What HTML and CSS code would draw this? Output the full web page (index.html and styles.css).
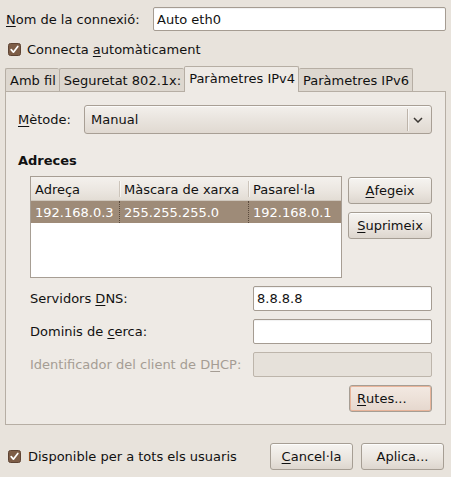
FILE: index.html
```html
<!DOCTYPE html>
<html>
<head>
<meta charset="utf-8">
<link rel="stylesheet" href="styles.css">
</head>
<body>
<div class="dialog">
  <div class="name-row">
    <span class="label"><u>N</u>om de la connexió:</span>
    <div class="entry name-entry">Auto eth0</div>
  </div>
  <div class="check-row">
    <span class="check"><svg width="13" height="13" viewBox="0 0 13 13"><rect x="0.5" y="0.5" width="12" height="12" rx="2" fill="#7d5d47" stroke="#5e4434"/><path d="M3.2 6.6 L5.4 9.2 L9.8 3.4" fill="none" stroke="#fff" stroke-width="1.7" stroke-linecap="round" stroke-linejoin="round"/></svg></span>
    <span>Connecta <u>a</u>utomàticament</span>
  </div>
  <div class="notebook">
    <div class="tabs">
      <div class="tab">Amb fil</div>
      <div class="tab">Seguretat 802.1x:</div>
      <div class="tab active">Paràmetres IPv4</div>
      <div class="tab">Paràmetres IPv6</div>
    </div>
    <div class="page">
      <div class="method-row">
        <span class="label"><u>M</u>ètode:</span>
        <div class="combo">
          <span class="combo-text">Manual</span>
          <span class="combo-sep"></span>
          <svg class="chevron" width="10" height="6" viewBox="0 0 10 6"><path d="M1 1 L5 5 L9 1" fill="none" stroke="#3c3834" stroke-width="1.5"/></svg>
        </div>
      </div>
      <div class="section-title">Adreces</div>
      <div class="addr-row">
        <div class="tree">
          <div class="tree-head">
            <div class="cell">Adreça</div>
            <div class="cell sep">Màscara de xarxa</div>
            <div class="cell sep">Pasarel·la</div>
          </div>
          <div class="tree-row selected">
            <div class="cell">192.168.0.3</div>
            <div class="cell dot">255.255.255.0</div>
            <div class="cell dot">192.168.0.1</div>
          </div>
        </div>
        <div class="addr-buttons">
          <div class="button"><u>A</u>fegeix</div>
          <div class="button"><u>S</u>uprimeix</div>
        </div>
      </div>
      <div class="form">
        <span class="label">Servidors <u>D</u>NS:</span>
        <div class="entry">8.8.8.8</div>
        <span class="label">Dominis de <u>c</u>erca:</span>
        <div class="entry"></div>
        <span class="label disabled">Identificador del client de D<u>H</u>CP:</span>
        <div class="entry disabled"></div>
      </div>
      <div class="routes-row">
        <div class="button focus"><u>R</u>utes...</div>
      </div>
    </div>
  </div>
  <div class="footer">
    <div class="check-row bottom">
      <span class="check"><svg width="13" height="13" viewBox="0 0 13 13"><rect x="0.5" y="0.5" width="12" height="12" rx="2" fill="#7d5d47" stroke="#5e4434"/><path d="M3.2 6.6 L5.4 9.2 L9.8 3.4" fill="none" stroke="#fff" stroke-width="1.7" stroke-linecap="round" stroke-linejoin="round"/></svg></span>
      <span>Disponible per a tots els usuaris</span>
    </div>
    <div class="footer-buttons">
      <div class="button"><u>C</u>ancel·la</div>
      <div class="button">Aplica...</div>
    </div>
  </div>
</div>
</body>
</html>
```
FILE: styles.css
```css
html, body {
  margin: 0;
  padding: 0;
}
body {
  background: #e8e3dc;
  font-family: "DejaVu Sans", sans-serif;
  font-size: 13px;
  color: #111;
  width: 451px;
  height: 477px;
  overflow: hidden;
}
u {
  text-decoration: underline;
  text-underline-offset: 2px;
}
.dialog {
  box-sizing: border-box;
  width: 451px;
  height: 477px;
  padding: 7px 5px 0 5px;
}
.name-row {
  display: flex;
  align-items: center;
  height: 24px;
}
.name-row .label {
  margin-left: 1px;
}
.entry {
  box-sizing: border-box;
  height: 25px;
  background: #fff;
  border: 1px solid #a59c92;
  border-radius: 2px;
  padding-left: 3px;
  display: flex;
  align-items: center;
  box-shadow: inset 0 1px 1px rgba(0,0,0,0.06);
}
.entry.disabled {
  background: #e6e1da;
  border-color: #bdb5ab;
  box-shadow: none;
}
.name-entry {
  margin-left: auto;
  width: 293px;
  height: 24px;
}
.check-row {
  display: flex;
  align-items: center;
  height: 14px;
  margin-top: 11px;
}
.check {
  display: inline-flex;
  width: 13px;
  height: 13px;
  margin-left: 3px;
  margin-right: 6px;
}
.notebook {
  margin-top: 10px;
  width: 441px;
}
.tabs {
  display: flex;
  align-items: flex-end;
  height: 25px;
  position: relative;
  z-index: 1;
}
.tab {
  box-sizing: border-box;
  height: 23px;
  padding: 1px 3px 0 4px;
  background: #ddd7cf;
  border: 1px solid #b6aea4;
  border-bottom: none;
  border-right: none;
  border-radius: 2px 2px 0 0;
  display: flex;
  align-items: center;
  white-space: nowrap;
}
.tab:last-child {
  border-right: 1px solid #b6aea4;
}
.tab.active {
  height: 26px;
  margin-bottom: -1px;
  background: #eeeae5;
  border-right: 1px solid #b6aea4;
  padding-top: 0;
  padding-bottom: 3px;
}
.tab.active + .tab {
  border-left: none;
}
.page {
  box-sizing: border-box;
  width: 441px;
  height: 334px;
  background: #eeeae5;
  border: 1px solid #b6aea4;
  padding: 13px 13px 0 12px;
}
.method-row {
  display: flex;
  align-items: center;
  height: 29px;
}
.combo {
  box-sizing: border-box;
  margin-left: auto;
  width: 348px;
  height: 29px;
  border: 1px solid #a89f95;
  border-radius: 3px;
  background: linear-gradient(#f3f0ec, #e9e4de 50%, #e0d9d1);
  display: flex;
  align-items: center;
  padding-left: 6px;
  box-shadow: inset 0 1px 0 rgba(255,255,255,0.7);
}
.combo-text {
  flex: 1;
}
.combo-sep {
  width: 1px;
  height: 22px;
  background: #bdb4aa;
  box-shadow: 1px 0 0 rgba(255,255,255,0.6);
  margin-right: 5px;
}
.chevron {
  margin-right: 8px;
}
.section-title {
  font-weight: bold;
  line-height: 16px;
  margin-top: 19px;
}
.addr-row {
  display: flex;
  align-items: flex-start;
  margin-top: 7px;
  margin-left: 12px;
}
.tree {
  box-sizing: border-box;
  width: 312px;
  height: 102px;
  background: #fff;
  border: 1px solid #a79e94;
}
.tree-head, .tree-row {
  display: grid;
  grid-template-columns: 88px 129px 1fr;
}
.tree-head {
  height: 24px;
  background: linear-gradient(#f4f1ed, #ebe6e0 60%, #e3ddd5);
  border-bottom: 1px solid #cfc7bd;
  box-sizing: border-box;
}
.tree-head .cell {
  display: flex;
  align-items: center;
  padding-left: 4px;
  white-space: nowrap;
}
.tree-head .cell.sep {
  border-left: 1px solid #cdc5bb;
  margin: 4px 0;
  height: 16px;
  box-shadow: inset 1px 0 0 rgba(255,255,255,0.6);
}
.tree-row {
  height: 22px;
}
.tree-row .cell {
  display: flex;
  align-items: center;
  padding-left: 4px;
  white-space: nowrap;
}
.tree-row.selected {
  background: #9e8b78;
  color: #fff;
}
.tree-row .cell.dot {
  border-left: 1px dotted #5a4a3c;
}
.addr-buttons {
  display: flex;
  flex-direction: column;
  gap: 8px;
  margin-left: 6px;
  margin-top: 1px;
}
.button {
  box-sizing: border-box;
  width: 84px;
  height: 27px;
  border: 1px solid #a69e94;
  border-radius: 3px;
  background: linear-gradient(#f6f4f1, #ebe6e0 55%, #ddd6ce);
  box-shadow: inset 0 1px 0 rgba(255,255,255,0.8);
  display: flex;
  align-items: center;
  justify-content: center;
  white-space: nowrap;
}
.form {
  display: grid;
  grid-template-columns: 223px 179px;
  grid-auto-rows: 25px;
  row-gap: 8px;
  margin-top: 8px;
  margin-left: 12px;
  align-items: center;
}
.label.disabled {
  color: #a59d94;
}
.routes-row {
  display: flex;
  justify-content: flex-end;
  margin-top: 8px;
}
.button.focus {
  width: 83px;
  background: linear-gradient(#f3e9e2, #ece0d7 55%, #e5d7cd);
  box-shadow: inset 0 0 0 1px #e8b49a;
  justify-content: flex-start;
  padding-left: 7px;
}
.footer {
  display: flex;
  align-items: center;
  justify-content: space-between;
  margin-top: 18px;
  margin-right: 2px;
  height: 27px;
}
.check-row.bottom {
  margin-top: 0;
}
.check-row.bottom .check {
  margin-right: 7px;
}
.footer-buttons {
  display: flex;
  gap: 8px;
}
.footer-buttons .button {
  width: 83px;
}
```
